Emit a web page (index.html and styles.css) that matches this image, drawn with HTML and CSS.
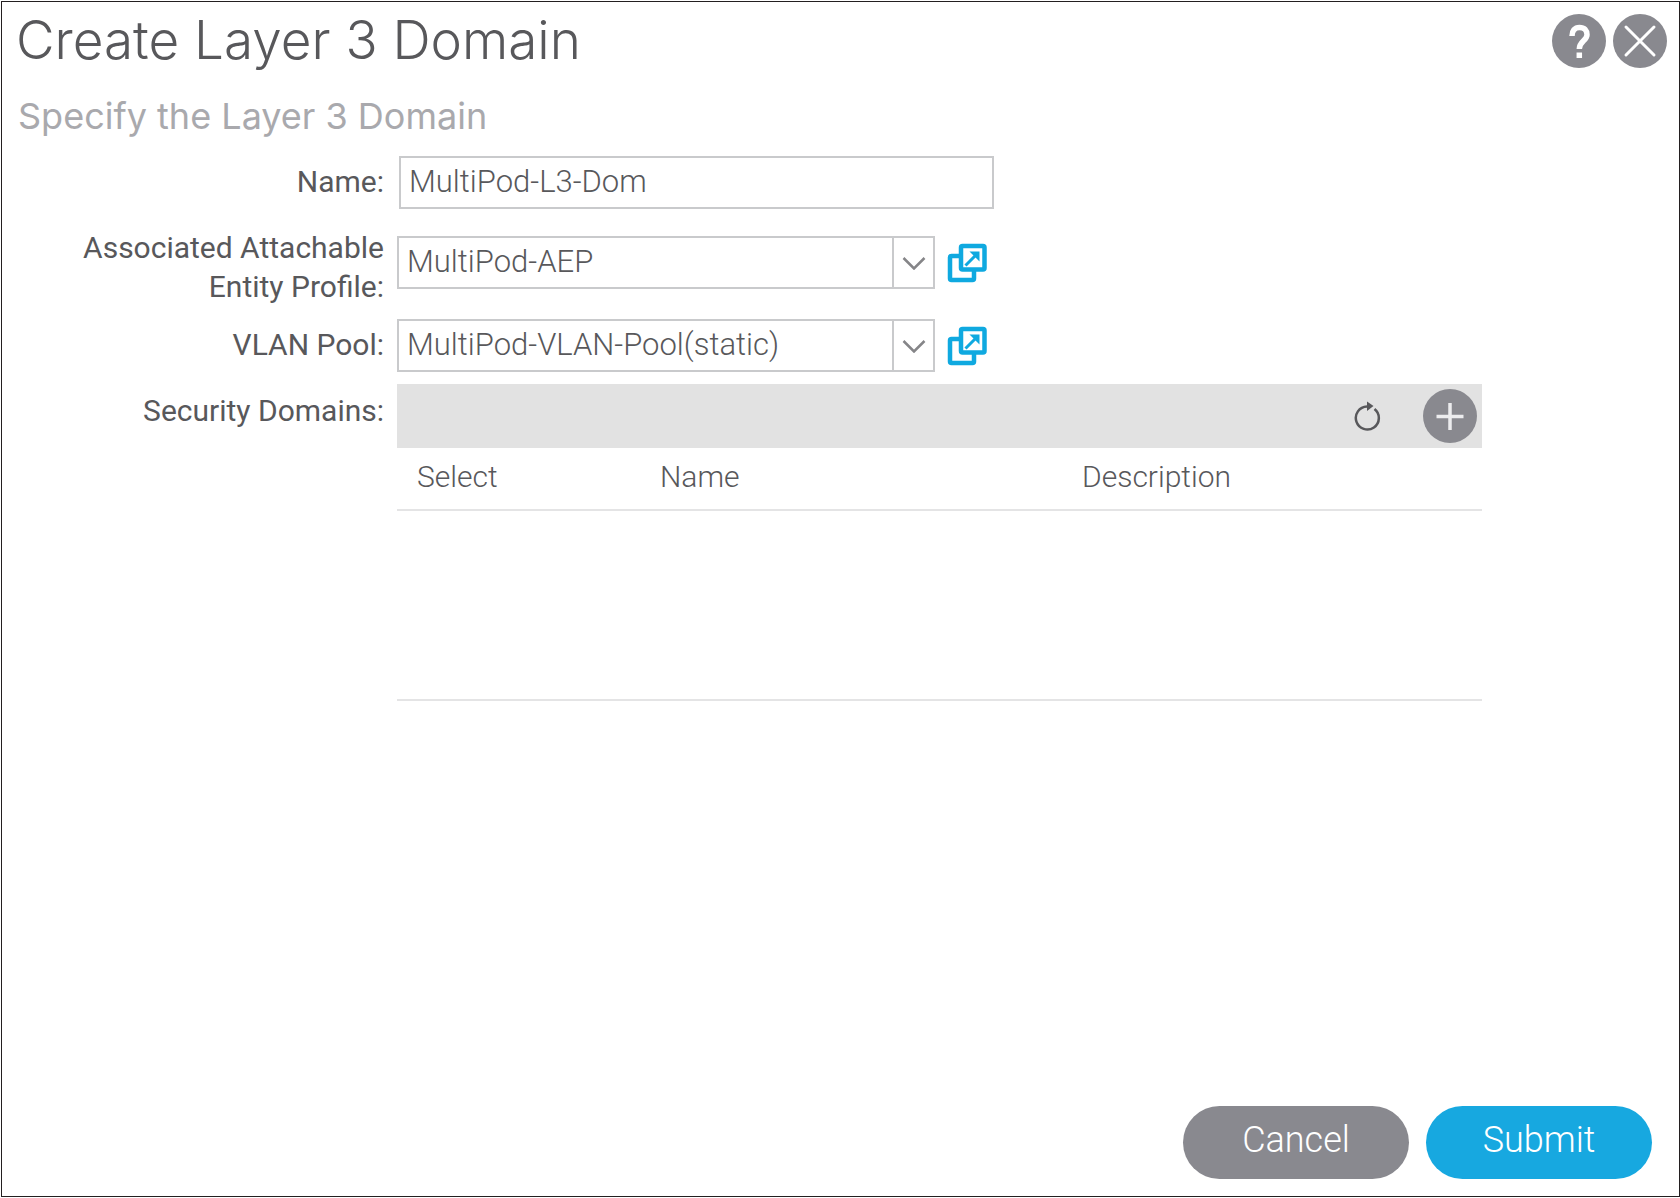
FILE: index.html
```html
<!DOCTYPE html>
<html lang="en">
<head>
<meta charset="utf-8">
<meta name="viewport" content="width=device-width, initial-scale=1">
<title>Create Layer 3 Domain</title>
<link rel="stylesheet" href="styles.css">
</head>
<body>
<main class="dialog">
  <header class="dialog-header">
    <h1 class="dialog-title">Create Layer 3 Domain</h1>
    <div class="dialog-tools">
      <button class="round-button" type="button" aria-label="Help">
        <svg viewBox="0 0 54 54" width="54" height="54" fill="none" stroke="#fff" stroke-width="5.500">
          <path d="M20 22c0-5 2.500-8.500 7.500-8.500s7.500 3 7.500 7.200c0 6-7.700 6.500-7.700 14.300" stroke-linejoin="round"/>
          <path d="M27.300 38.500v5.500"/>
        </svg>
      </button>
      <button class="round-button" type="button" aria-label="Close">
        <svg viewBox="0 0 54 54" width="54" height="54" fill="none" stroke="#fff" stroke-width="3" stroke-linecap="round">
          <path d="M13 13l28 28M41 13L13 41"/>
        </svg>
      </button>
    </div>
  </header>
  <h2 class="dialog-subtitle">Specify the Layer 3 Domain</h2>

  <form class="form" id="domain-form">
    <div class="row">
      <label class="label" for="name">Name:</label>
      <div class="field field-text">
        <input class="text-input" id="name" type="text" value="MultiPod-L3-Dom">
      </div>
    </div>
    <div class="row row-tall">
      <label class="label" for="aep">Associated Attachable Entity Profile:</label>
      <div class="field">
        <div class="combo">
          <select class="combo-select" id="aep"><option>MultiPod-AEP</option></select>
          <span class="combo-arrow"><svg viewBox="0 0 24 14" width="24" height="14" fill="none" stroke="#858588" stroke-width="2.500"><path d="M1.500 2L12 12.500 22.500 2"/></svg></span>
        </div>
        <a class="open-link" href="#aep" aria-label="Open profile">
          <svg viewBox="0 0 40 40" width="40" height="40" fill="none" stroke="#0fa9e0" stroke-width="4.500">
            <path d="M12 13H4.500a1.500 1.500 0 0 0-1.500 1.500v21a1.500 1.500 0 0 0 1.500 1.500h21a1.500 1.500 0 0 0 1.500-1.500V28"/>
            <rect x="14" y="3" width="23.500" height="23.500" rx="1.500"/>
            <path d="M18.500 22.500L31 10" stroke-width="3"/><path d="M22.500 8.500h10v10z" fill="#0fa9e0" stroke="none"/>
          </svg>
        </a>
      </div>
    </div>
    <div class="row">
      <label class="label" for="vlan">VLAN Pool:</label>
      <div class="field">
        <div class="combo">
          <select class="combo-select" id="vlan"><option>MultiPod-VLAN-Pool(static)</option></select>
          <span class="combo-arrow"><svg viewBox="0 0 24 14" width="24" height="14" fill="none" stroke="#858588" stroke-width="2.500"><path d="M1.500 2L12 12.500 22.500 2"/></svg></span>
        </div>
        <a class="open-link" href="#vlan" aria-label="Open pool">
          <svg viewBox="0 0 40 40" width="40" height="40" fill="none" stroke="#0fa9e0" stroke-width="4.500">
            <path d="M12 13H4.500a1.500 1.500 0 0 0-1.500 1.500v21a1.500 1.500 0 0 0 1.500 1.500h21a1.500 1.500 0 0 0 1.500-1.500V28"/>
            <rect x="14" y="3" width="23.500" height="23.500" rx="1.500"/>
            <path d="M18.500 22.500L31 10" stroke-width="3"/><path d="M22.500 8.500h10v10z" fill="#0fa9e0" stroke="none"/>
          </svg>
        </a>
      </div>
    </div>
    <div class="row">
      <span class="label" id="security-label">Security Domains:</span>
      <div class="security">
        <div class="toolbar">
          <button class="icon-button" type="button" aria-label="Refresh">
            <svg viewBox="0 0 32 32" width="32" height="32" fill="none" stroke="#58585b" stroke-width="2.500">
              <path d="M16 6.500A11.500 11.500 0 1 0 23.500 9"/>
              <path d="M16 1.500l6.500 4.500-6.500 5z" fill="#58585b" stroke="none"/>
            </svg>
          </button>
          <button class="round-button" type="button" aria-label="Add security domain">
            <svg viewBox="0 0 54 54" width="54" height="54" fill="none" stroke="#ececee" stroke-width="3.500">
              <path d="M27 14v27M13.500 27.500h27"/>
            </svg>
          </button>
        </div>
        <table class="table" aria-labelledby="security-label">
          <thead>
            <tr><th class="col-select" scope="col">Select</th><th class="col-name" scope="col">Name</th><th scope="col">Description</th></tr>
          </thead>
          <tbody>
            <tr><td class="empty" colspan="3"></td></tr>
          </tbody>
        </table>
      </div>
    </div>
  </form>

  <footer class="dialog-footer">
    <button class="pill pill-cancel" type="button">Cancel</button>
    <button class="pill pill-submit" type="submit" form="domain-form">Submit</button>
  </footer>
</main>
</body>
</html>
```
FILE: styles.css
```css
* {
  box-sizing: border-box;
}

body {
  margin: 0;
  padding: 1px 0 1px 1px;
  background: #fff;
  color: #58585b;
  font: 400 30px/39px Roboto, "Liberation Sans", sans-serif;
}

button,
input,
select {
  margin: 0;
  font: inherit;
}

svg {
  display: block;
}

.dialog {
  display: flex;
  flex-direction: column;
  min-height: calc(100vh - 2px);
  border: 1px solid #231f20;
}

.dialog-header {
  display: flex;
  justify-content: space-between;
  align-items: flex-start;
  padding: 6px 12px 0 14px;
}

.dialog-title {
  margin: 0;
  font-family: Inter, Roboto, sans-serif;
  font-size: 53px;
  line-height: 64px;
  font-weight: 300;
}

.dialog-tools {
  display: flex;
  gap: 7px;
  padding-top: 6px;
}

.round-button {
  width: 54px;
  height: 54px;
  padding: 0;
  border: 0;
  border-radius: 50%;
  background: #89898f;
}

.dialog-subtitle {
  margin: 0;
  padding: 22px 16px 17px;
  font-family: Inter, Roboto, sans-serif;
  font-size: 36px;
  line-height: 44px;
  font-weight: 400;
  color: #a9a9ad;
}

.form {
  display: flex;
  flex-direction: column;
  gap: 12px;
  padding-right: 197px;
}

.row {
  display: grid;
  grid-template-columns: 382px 1fr;
  column-gap: 13px;
}

.row-tall {
  padding-top: 7px;
}

.label {
  padding: 7px 0 0 70px;
  text-align: right;
}

.row-tall .label {
  padding-top: 0;
}

.field {
  display: flex;
  align-items: flex-start;
  gap: 12px;
  padding-top: 1px;
}

.field-text {
  padding-left: 2px;
}

.row-tall .field {
  padding-top: 8px;
}

.text-input,
.combo-select {
  height: 53px;
  padding: 0 8px 2px;
  border: 2px solid #c9cacc;
  border-radius: 0;
  background: #fff;
  color: #58585b;
  font-size: 31px;
  font-weight: 300;
}

.text-input {
  width: 595px;
}

.combo {
  position: relative;
  width: 538px;
}

.combo-select {
  width: 100%;
  appearance: none;
}

.combo-arrow {
  position: absolute;
  top: 0;
  right: 0;
  bottom: 0;
  display: grid;
  place-items: center;
  width: 43px;
  padding-right: 2px;
  border-left: 2px solid #c9cacc;
  pointer-events: none;
}

.open-link {
  padding-top: 7px;
}

.toolbar {
  display: flex;
  justify-content: flex-end;
  align-items: center;
  gap: 40px;
  height: 64px;
  padding-right: 5px;
  background: #e2e2e2;
}

.icon-button {
  padding: 0;
  border: 0;
  background: none;
}

.table {
  width: 100%;
  border-collapse: collapse;
  table-layout: fixed;
}

.table th {
  height: 62px;
  padding: 0 0 5px 20px;
  border-bottom: 2px solid #e4e4e5;
  color: #58585b;
  font-weight: 300;
  text-align: left;
}

.col-select {
  width: 243px;
}

.col-name {
  width: 422px;
}

.table .empty {
  height: 190px;
  padding: 0;
  border-bottom: 2px solid #e4e4e5;
}

.dialog-footer {
  display: flex;
  justify-content: flex-end;
  gap: 17px;
  margin-top: auto;
  padding: 17px 27px 17px 16px;
}

.pill {
  width: 226px;
  height: 73px;
  padding: 0 0 4px;
  border: 0;
  border-radius: 37px;
  color: #fff;
  font-size: 36px;
  font-weight: 300;
}

.pill-cancel {
  background: #89898f;
}

.pill-submit {
  background: #17a8e0;
}
```
